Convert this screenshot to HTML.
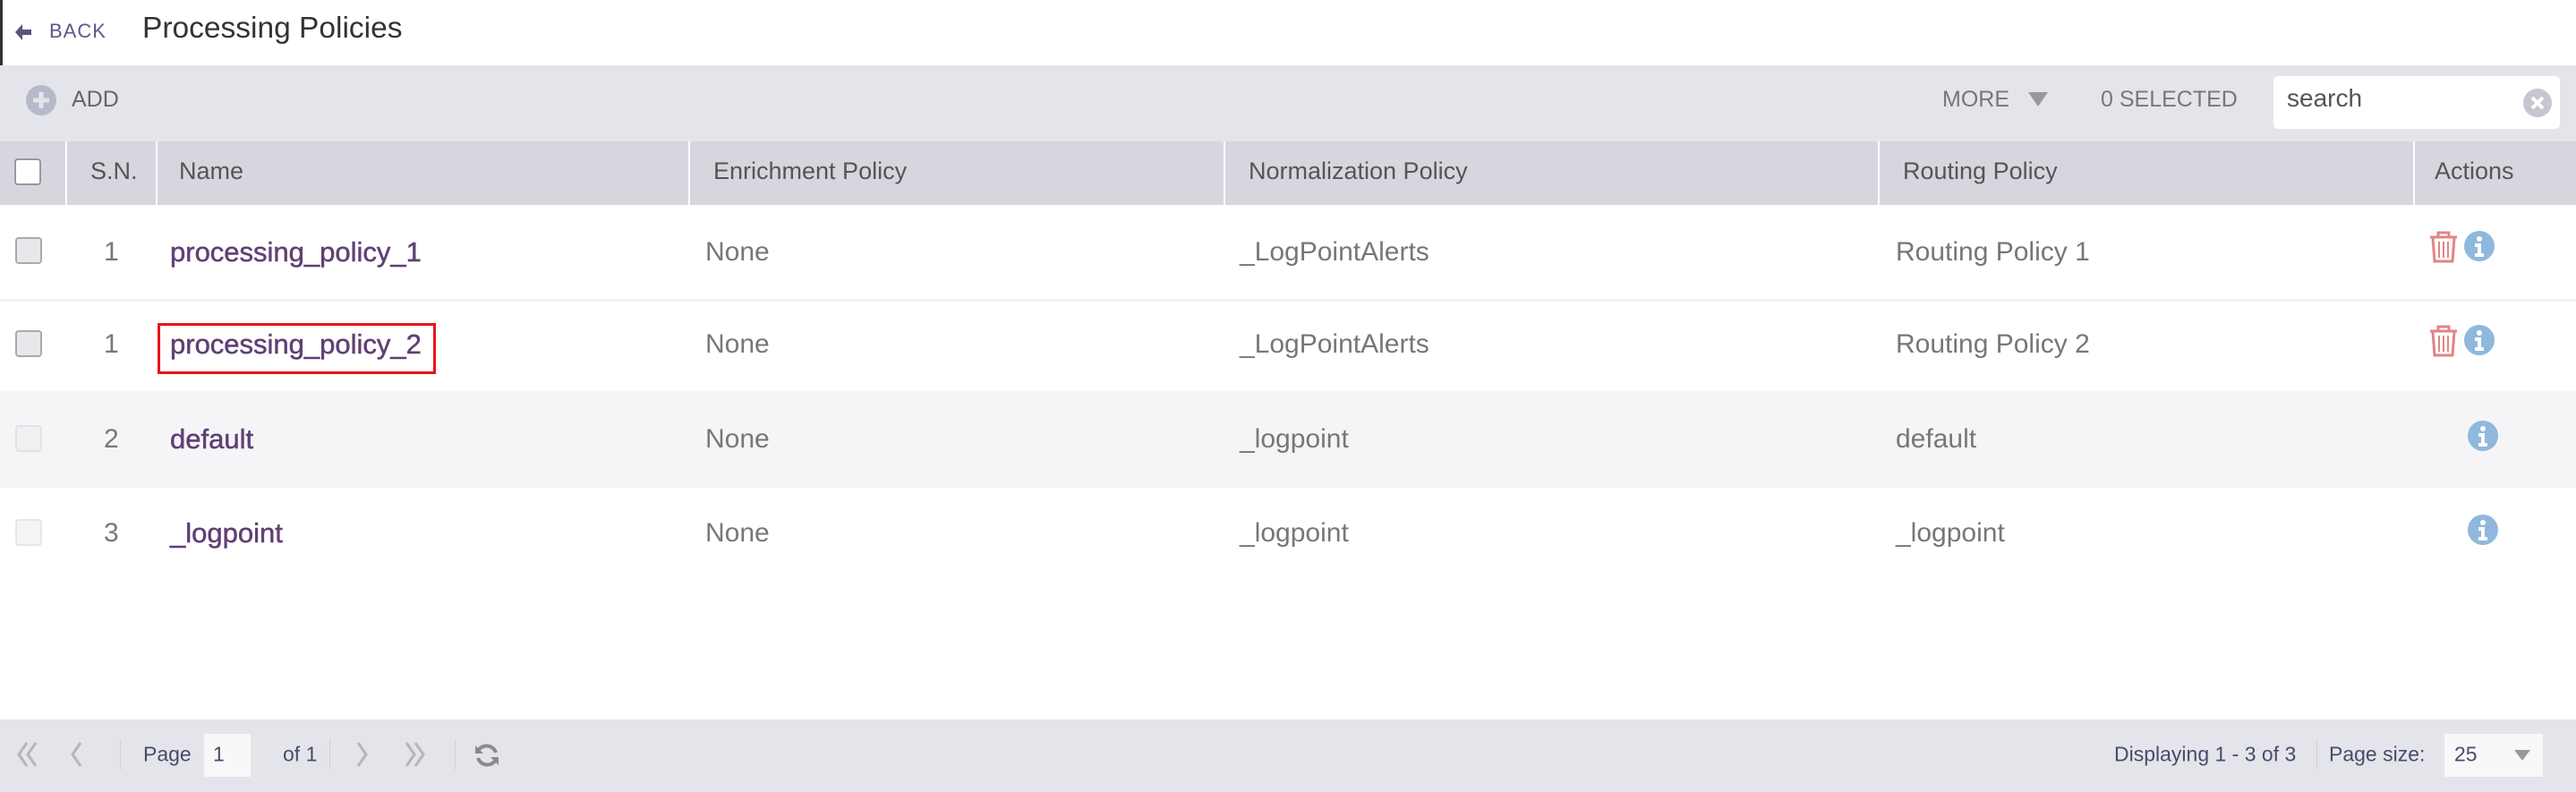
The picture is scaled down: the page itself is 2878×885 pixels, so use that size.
<!DOCTYPE html>
<html><head><style>
*{margin:0;padding:0;box-sizing:border-box}
body{width:2878px;height:885px;overflow:hidden;background:#fff;font-family:"Liberation Sans",sans-serif;position:relative}
.a{position:absolute;white-space:nowrap}
.hdr{top:0;left:0;width:2878px;height:73px;background:#fff;border-left:3px solid #333;box-shadow:0 2px 4px rgba(0,0,0,.08)}
.tb{top:73px;left:0;width:2878px;height:85px;background:#e4e5ea}
.th{top:158px;height:71px;background:#d6d7de;color:#555;font-size:27px;line-height:66px;padding-left:26px}
.row{left:0;width:2878px}
.cb{width:30px;height:30px;border:2px solid #aaa;border-radius:4px;background:#e8e8ec}
.t{font-size:30px;color:#777;transform:translateY(-50%)}
.n{font-size:31px;color:#613f74;transform:translateY(-50%);-webkit-text-stroke:0.5px #613f74}
.ft{top:804px;left:0;width:2878px;height:81px;background:#e4e5ea}
.fs{font-size:23px;color:#4a4a6a;transform:translateY(-50%);top:843px}
</style></head><body>
<div class="a hdr"></div>
<svg class="a" style="left:14px;top:24px" width="24" height="24" viewBox="0 0 24 24"><path d="M11 3 L3 12 L11 21 L11 15 L21 15 L21 9 L11 9Z" fill="#55557e"/></svg>
<div class="a" style="left:55px;top:22px;font-size:22px;color:#5a5a8a;letter-spacing:1px">BACK</div>
<div class="a" style="left:159px;top:13px;font-size:33.5px;color:#333">Processing Policies</div>

<div class="a tb"></div>
<svg class="a" style="left:28px;top:94px" width="36" height="36" viewBox="0 0 36 36"><circle cx="18" cy="18" r="17" fill="#b8b9c8"/><path d="M18 9v18M9 18h18" stroke="#e4e5ea" stroke-width="5"/></svg>
<div class="a" style="left:80px;top:97px;font-size:25px;color:#666">ADD</div>
<div class="a" style="left:2170px;top:97px;font-size:25px;color:#777">MORE</div>
<svg class="a" style="left:2266px;top:103px" width="22" height="16"><path d="M0 0H22L11 16Z" fill="#999"/></svg>
<div class="a" style="left:2347px;top:97px;font-size:25px;color:#777">0 SELECTED</div>
<div class="a" style="left:2540px;top:85px;width:320px;height:59px;background:#fff;border-radius:5px"></div>
<div class="a" style="left:2555px;top:94px;font-size:28px;color:#555">search</div>
<svg class="a" style="left:2818px;top:98px" width="34" height="34" viewBox="0 0 34 34"><circle cx="17" cy="17" r="16" fill="#c5c6d0"/><path d="M11 11l12 12M23 11l-12 12" stroke="#fff" stroke-width="4"/></svg>

<div class="a th" style="left:0;width:73px"></div>
<div class="a" style="left:16px;top:177px;width:30px;height:30px;background:#fff;border:2px solid #999;border-radius:4px"></div>
<div class="a th" style="left:75px;width:99px">S.N.</div>
<div class="a th" style="left:176px;width:593px;padding-left:24px">Name</div>
<div class="a th" style="left:771px;width:596px">Enrichment Policy</div>
<div class="a th" style="left:1369px;width:729px">Normalization Policy</div>
<div class="a th" style="left:2100px;width:596px">Routing Policy</div>
<div class="a th" style="left:2698px;width:180px;padding-left:22px">Actions</div>

<div class="a row" style="top:229px;height:105px;background:#fff"></div>
<div class="a row" style="top:334px;height:3px;background:#f1f1f3"></div>
<div class="a row" style="top:437px;height:108px;background:#f5f5f7"></div>

<div class="a cb" style="left:17px;top:265px"></div>
<div class="a t" style="left:116px;top:282px">1</div>
<div class="a n" style="left:190px;top:282px">processing_policy_1</div>
<div class="a t" style="left:788px;top:282px">None</div>
<div class="a t" style="left:1385px;top:282px">_LogPointAlerts</div>
<div class="a t" style="left:2118px;top:282px">Routing Policy 1</div>

<div class="a cb" style="left:17px;top:369px"></div>
<div class="a t" style="left:116px;top:385px">1</div>
<div class="a" style="left:176px;top:361px;width:311px;height:57px;border:3px solid #e8141a"></div>
<div class="a n" style="left:190px;top:385px">processing_policy_2</div>
<div class="a t" style="left:788px;top:385px">None</div>
<div class="a t" style="left:1385px;top:385px">_LogPointAlerts</div>
<div class="a t" style="left:2118px;top:385px">Routing Policy 2</div>

<div class="a cb" style="left:17px;top:475px;border-color:#e2e2e6;background:#f0f0f2"></div>
<div class="a t" style="left:116px;top:491px">2</div>
<div class="a n" style="left:190px;top:491px">default</div>
<div class="a t" style="left:788px;top:491px">None</div>
<div class="a t" style="left:1385px;top:491px">_logpoint</div>
<div class="a t" style="left:2118px;top:491px">default</div>

<div class="a cb" style="left:17px;top:580px;border-color:#e6e6ea;background:#f5f5f7"></div>
<div class="a t" style="left:116px;top:596px">3</div>
<div class="a n" style="left:190px;top:596px">_logpoint</div>
<div class="a t" style="left:788px;top:596px">None</div>
<div class="a t" style="left:1385px;top:596px">_logpoint</div>
<div class="a t" style="left:2118px;top:596px">_logpoint</div>

<svg class="a" style="left:2713px;top:258px" width="34" height="36" viewBox="0 0 34 36"><path d="M11 6V2h12v4M2 7h30M5 8l2 26h20l2-26" fill="none" stroke="#e08585" stroke-width="3"/><path d="M12 12v18M17 12v18M22 12v18" stroke="#e08585" stroke-width="2"/></svg>
<svg class="a" style="left:2752px;top:257px" width="36" height="36" viewBox="0 0 36 36"><circle cx="18" cy="18" r="17" fill="#8fb8dc"/><circle cx="18" cy="10" r="3" fill="#fff"/><path d="M13 15h7v11h3v4H13v-4h3v-7h-3z" fill="#fff"/></svg>
<svg class="a" style="left:2713px;top:363px" width="34" height="36" viewBox="0 0 34 36"><path d="M11 6V2h12v4M2 7h30M5 8l2 26h20l2-26" fill="none" stroke="#e08585" stroke-width="3"/><path d="M12 12v18M17 12v18M22 12v18" stroke="#e08585" stroke-width="2"/></svg>
<svg class="a" style="left:2752px;top:362px" width="36" height="36" viewBox="0 0 36 36"><circle cx="18" cy="18" r="17" fill="#8fb8dc"/><circle cx="18" cy="10" r="3" fill="#fff"/><path d="M13 15h7v11h3v4H13v-4h3v-7h-3z" fill="#fff"/></svg>
<svg class="a" style="left:2756px;top:469px" width="36" height="36" viewBox="0 0 36 36"><circle cx="18" cy="18" r="17" fill="#8fb8dc"/><circle cx="18" cy="10" r="3" fill="#fff"/><path d="M13 15h7v11h3v4H13v-4h3v-7h-3z" fill="#fff"/></svg>
<svg class="a" style="left:2756px;top:574px" width="36" height="36" viewBox="0 0 36 36"><circle cx="18" cy="18" r="17" fill="#8fb8dc"/><circle cx="18" cy="10" r="3" fill="#fff"/><path d="M13 15h7v11h3v4H13v-4h3v-7h-3z" fill="#fff"/></svg>

<div class="a ft"></div>
<svg class="a" style="left:18px;top:828px" width="110" height="30" viewBox="0 0 110 30"><path d="M12 2L3 15l9 13M22 2l-9 13 9 13M72 2l-9 13 9 13" fill="none" stroke="#b5b5bd" stroke-width="3"/></svg>
<div class="a" style="left:134px;top:826px;width:1px;height:34px;background:#d0d0d8"></div>
<div class="a fs" style="left:160px">Page</div>
<div class="a" style="left:228px;top:820px;width:52px;height:48px;background:#f8f8f9"></div>
<div class="a fs" style="left:238px">1</div>
<div class="a fs" style="left:316px">of 1</div>
<div class="a" style="left:368px;top:826px;width:1px;height:34px;background:#d0d0d8"></div>
<svg class="a" style="left:395px;top:828px" width="110" height="30" viewBox="0 0 110 30"><path d="M5 2l9 13-9 13M59 2l9 13-9 13M69 2l9 13-9 13" fill="none" stroke="#b5b5bd" stroke-width="3"/></svg>
<div class="a" style="left:508px;top:826px;width:1px;height:34px;background:#d0d0d8"></div>
<svg class="a" style="left:529px;top:829px" width="30" height="30" viewBox="0 0 30 30"><path d="M25 12A11 11 0 0 0 5 10M5 18a11 11 0 0 0 20 2" fill="none" stroke="#8a8a92" stroke-width="4"/><path d="M2 4v9h9zM28 26v-9h-9z" fill="#8a8a92"/></svg>
<div class="a fs" style="left:2362px">Displaying 1 - 3 of 3</div>
<div class="a" style="left:2588px;top:826px;width:1px;height:34px;background:#d0d0d8"></div>
<div class="a fs" style="left:2602px">Page size:</div>
<div class="a" style="left:2731px;top:820px;width:110px;height:48px;background:#f8f8f9"></div>
<div class="a fs" style="left:2742px">25</div>
<svg class="a" style="left:2809px;top:838px" width="18" height="12"><path d="M0 0H18L9 12Z" fill="#999"/></svg>
</body></html>
